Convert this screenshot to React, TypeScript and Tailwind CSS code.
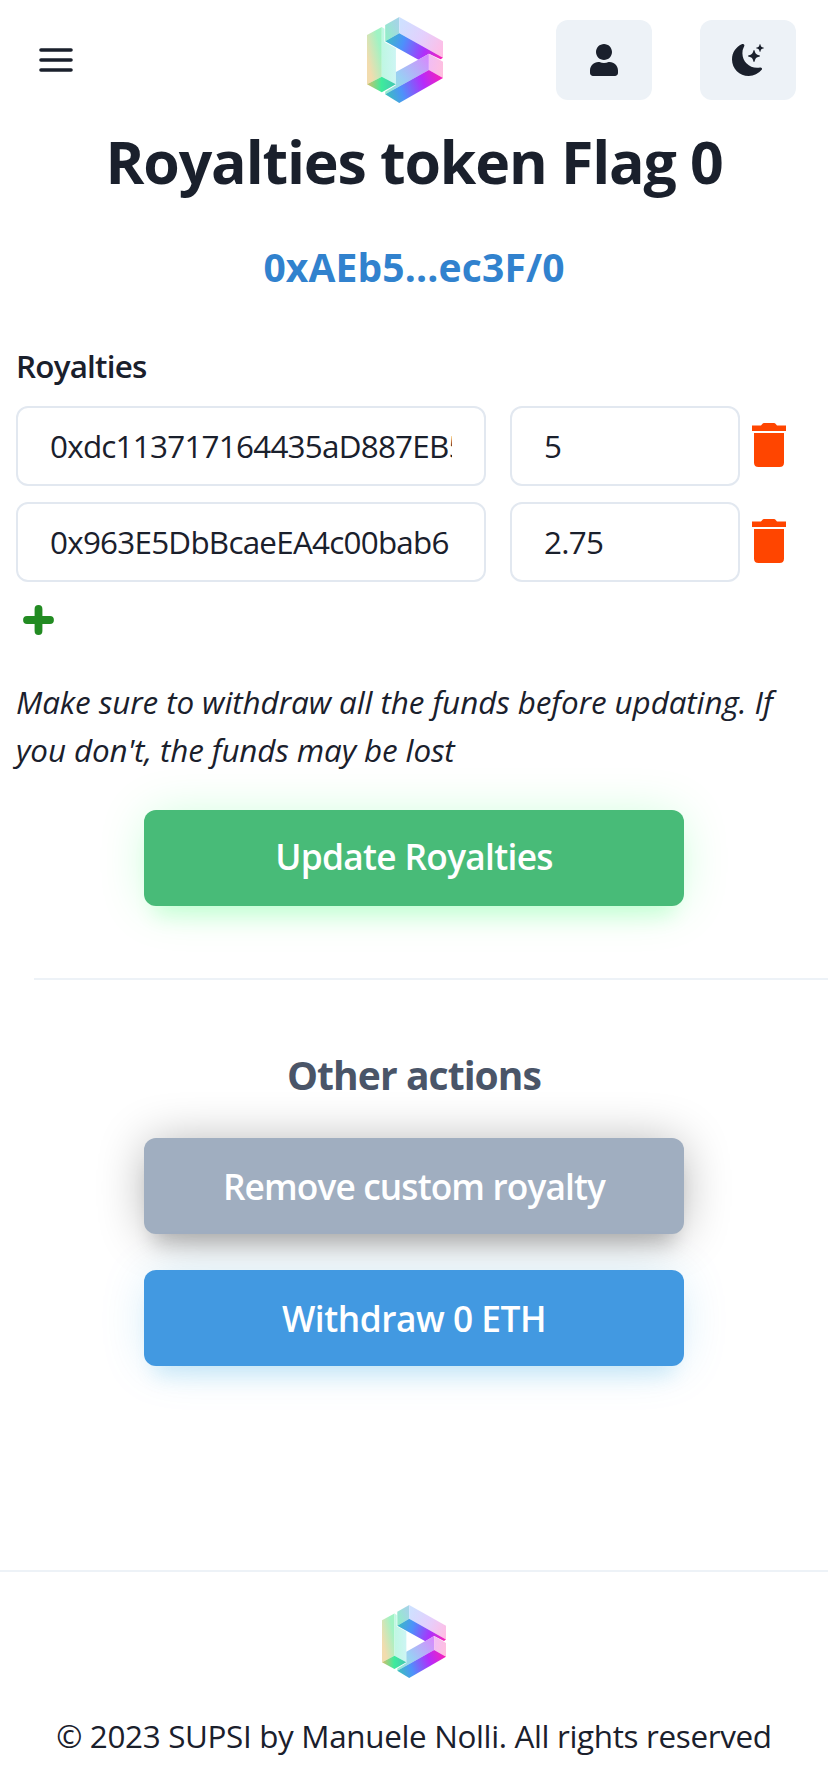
import { useId, type ReactNode } from "react";
import { FaUser } from "react-icons/fa";
import { BsMoonStarsFill } from "react-icons/bs";

function Logo({ className }: { className: string }) {
  const id = useId().replace(/[^a-zA-Z0-9]/g, "");
  const g = (n: string) => `${id}${n}`;
  const url = (n: string) => `url(#${id}${n})`;
  return (
    <svg viewBox="52 38 226 258" preserveAspectRatio="none" className={className} aria-hidden="true">
      <defs>
        <linearGradient id={g("left")} gradientUnits="userSpaceOnUse" x1="52" y1="160" x2="96" y2="150">
          <stop offset="0" stopColor="#f2dcae" />
          <stop offset="1" stopColor="#a0f3c4" />
        </linearGradient>
        <linearGradient id={g("inner")} gradientUnits="userSpaceOnUse" x1="96" y1="150" x2="138" y2="150">
          <stop offset="0" stopColor="#bff7e2" />
          <stop offset="1" stopColor="#cdf5f4" />
        </linearGradient>
        <linearGradient id={g("green")} gradientUnits="userSpaceOnUse" x1="52" y1="240" x2="138" y2="240">
          <stop offset="0" stopColor="#d6bd6a" />
          <stop offset="0.5" stopColor="#3eeb9c" />
          <stop offset="1" stopColor="#45c6b4" />
        </linearGradient>
        <linearGradient id={g("cap")} gradientUnits="userSpaceOnUse" x1="106" y1="90" x2="148" y2="70">
          <stop offset="0" stopColor="#93ecc9" />
          <stop offset="1" stopColor="#a5d5e6" />
        </linearGradient>
        <linearGradient id={g("top")} gradientUnits="userSpaceOnUse" x1="148" y1="70" x2="278" y2="135">
          <stop offset="0" stopColor="#cfe0ff" />
          <stop offset="0.5" stopColor="#e3d0fd" />
          <stop offset="1" stopColor="#ffbde5" />
        </linearGradient>
        <linearGradient id={g("bottom")} gradientUnits="userSpaceOnUse" x1="106" y1="105" x2="278" y2="160">
          <stop offset="0" stopColor="#3bbdc0" />
          <stop offset="0.3" stopColor="#4c91fb" />
          <stop offset="0.68" stopColor="#ae30fb" />
          <stop offset="1" stopColor="#fb22b4" />
        </linearGradient>
        <linearGradient id={g("low")} gradientUnits="userSpaceOnUse" x1="106" y1="260" x2="236" y2="165">
          <stop offset="0" stopColor="#94eccf" />
          <stop offset="0.4" stopColor="#9bcdf5" />
          <stop offset="1" stopColor="#d58cfc" />
        </linearGradient>
        <linearGradient id={g("pink")} gradientUnits="userSpaceOnUse" x1="236" y1="180" x2="278" y2="190">
          <stop offset="0" stopColor="#f2bdf3" />
          <stop offset="1" stopColor="#ffbfdf" />
        </linearGradient>
        <linearGradient id={g("base")} gradientUnits="userSpaceOnUse" x1="106" y1="275" x2="278" y2="215">
          <stop offset="0" stopColor="#3bc2b8" />
          <stop offset="0.28" stopColor="#4d92fa" />
          <stop offset="0.66" stopColor="#b42bfb" />
          <stop offset="1" stopColor="#fb20b6" />
        </linearGradient>
      </defs>
      <path d="M52 92L96 68V217L52 240Z" fill={url("left")} />
      <path d="M96 68L104 73V113L138 132V240L96 217Z" fill={url("inner")} />
      <path d="M52 240L96 217L138 240L96 264Z" fill={url("green")} />
      <path d="M148 38L106 62V111L148 87Z" fill={url("cap")} />
      <path d="M148 38L278 111V160L148 87Z" fill={url("top")} />
      <path d="M106 111L148 87L278 160L271 165L236 148L205 166Z" fill={url("bottom")} />
      <path d="M236 148V197L106 270V262L138 243V203Z" fill={url("low")} />
      <path d="M236 148L278 172V221L236 197Z" fill={url("pink")} />
      <path d="M236 197L278 221L148 296L106 270Z" fill={url("base")} />
    </svg>
  );
}

function MenuIcon() {
  return (
    <svg viewBox="0 0 34 24" className="h-6 w-[34px]" stroke="#1a202c" strokeWidth="3.6" strokeLinecap="round">
      <path d="M2 2H32M2 12H32M2 22H32" />
    </svg>
  );
}

function TrashIcon() {
  return (
    <svg viewBox="0 0 34 44" className="h-11 w-[34px]" fill="#ff4500">
      <path d="M0 2.5H9L10.5 .7Q11 0 12 0H22Q23 0 23.500 .7L25 2.500H34V8H0Z" />
      <path d="M2 10H32V39.500Q32 44 27.500 44H6.500Q2 44 2 39.500Z" />
    </svg>
  );
}

function PlusIcon() {
  return (
    <svg viewBox="0 0 31 30" className="h-[30px] w-[31px]" stroke="#228b22" strokeWidth="7.8" strokeLinecap="round">
      <path d="M4 15H27M15.500 4V26" />
    </svg>
  );
}

function SquareButton({ label, children }: { label: string; children: ReactNode }) {
  return (
    <button aria-label={label} className="flex h-20 w-24 items-center justify-center rounded-xl bg-[#edf2f7]">
      {children}
    </button>
  );
}

const royalties = [
  { address: "0xdc113717164435aD887EB5", share: "5" },
  { address: "0x963E5DbBcaeEA4c00bab6", share: "2.75" },
];

const field =
  "h-20 rounded-xl border-2 border-[#e2e8f0] bg-white px-8 pb-[2px] text-[31.4px] tracking-[-0.75px] outline-none";
const action =
  "h-24 w-[540px] rounded-xl text-[35.3px] font-semibold text-white";

export default function App() {
  return (
    <div className="flex h-[1792px] w-[828px] flex-col overflow-hidden bg-white font-['Open_Sans','Noto_Sans',sans-serif] text-[#1a202c]">
      <header className="flex h-[120px] items-center pr-8 pl-[39px]">
        <button aria-label="Menu">
          <MenuIcon />
        </button>
        <Logo className="ml-[294px] h-[86px] w-[76px]" />
        <div className="ml-auto flex gap-12">
          <SquareButton label="Account">
            <FaUser className="h-8 w-7" />
          </SquareButton>
          <SquareButton label="Dark mode">
            <BsMoonStarsFill className="size-8" />
          </SquareButton>
        </div>
      </header>

      <main className="flex flex-col">
        <h1 className="mt-[5px] text-center text-[59px] leading-[72px] font-bold tracking-[-1.13px]">
          Royalties token Flag 0
        </h1>
        <a className="mt-[46px] text-center text-[39px] leading-[48px] font-bold tracking-[0.14px] text-[#3182ce]">
          0xAEb5...ec3F/0
        </a>

        <label className="mt-[51px] ml-4 text-[31.4px] leading-[48px] font-semibold tracking-[-0.78px]">Royalties</label>
        <div className="mt-4 ml-4 flex flex-col gap-4">
          {royalties.map((r) => (
            <div key={r.address} className="flex">
              <input className={`${field} w-[470px]`} defaultValue={r.address} />
              <input className={`${field} ml-6 w-[230px]`} defaultValue={r.share} />
              <button aria-label="Remove" className="mt-[17px] ml-3 h-11">
                <TrashIcon />
              </button>
            </div>
          ))}
        </div>
        <button aria-label="Add" className="mt-[23px] ml-[23px] self-start">
          <PlusIcon />
        </button>

        <p className="mt-[43px] ml-4 text-[31.4px] leading-[48px] tracking-[-0.08px] italic">
          Make sure to withdraw all the funds before updating. If
          <br />
          <span className="tracking-[-0.12px]">you don't, the funds may be lost</span>
        </p>
        <button
          className={`${action} mt-9 self-center bg-[#48bb78] pb-[3px] tracking-[-0.7px] shadow-[0_2px_50px_-6px_rgba(0,255,72,0.23),0_20px_20px_-10px_rgba(0,255,72,0.14)]`}
        >
          Update Royalties
        </button>

        <hr className="mt-[72px] ml-[34px] border-t-2 border-[#edf2f7]" />

        <h2 className="mt-[71px] text-center text-[39px] leading-[48px] font-bold tracking-[-0.93px] text-[#4a5568]">
          Other actions
        </h2>
        <button
          className={`${action} mt-[39px] self-center bg-[#a0aec0] tracking-[-0.89px] shadow-[0_2px_50px_-4px_rgba(0,0,0,0.33),0_20px_20px_-10px_rgba(0,0,0,0.18)]`}
        >
          Remove custom royalty
        </button>
        <button
          className={`${action} mt-9 self-center bg-[#4299e1] tracking-[-0.48px] shadow-[0_2px_50px_-6px_rgba(0,150,220,0.2),0_20px_20px_-10px_rgba(0,150,220,0.14)]`}
        >
          Withdraw 0 ETH
        </button>
      </main>

      <footer className="mt-auto flex h-[222px] flex-col items-center border-t-2 border-[#edf2f7]">
        <Logo className="mt-[33px] h-[73px] w-[64px]" />
        <p className="mt-[34px] text-[31.4px] leading-[48px] tracking-[-0.335px]">
          © 2023 SUPSI by Manuele Nolli. All rights reserved
        </p>
      </footer>
    </div>
  );
}
